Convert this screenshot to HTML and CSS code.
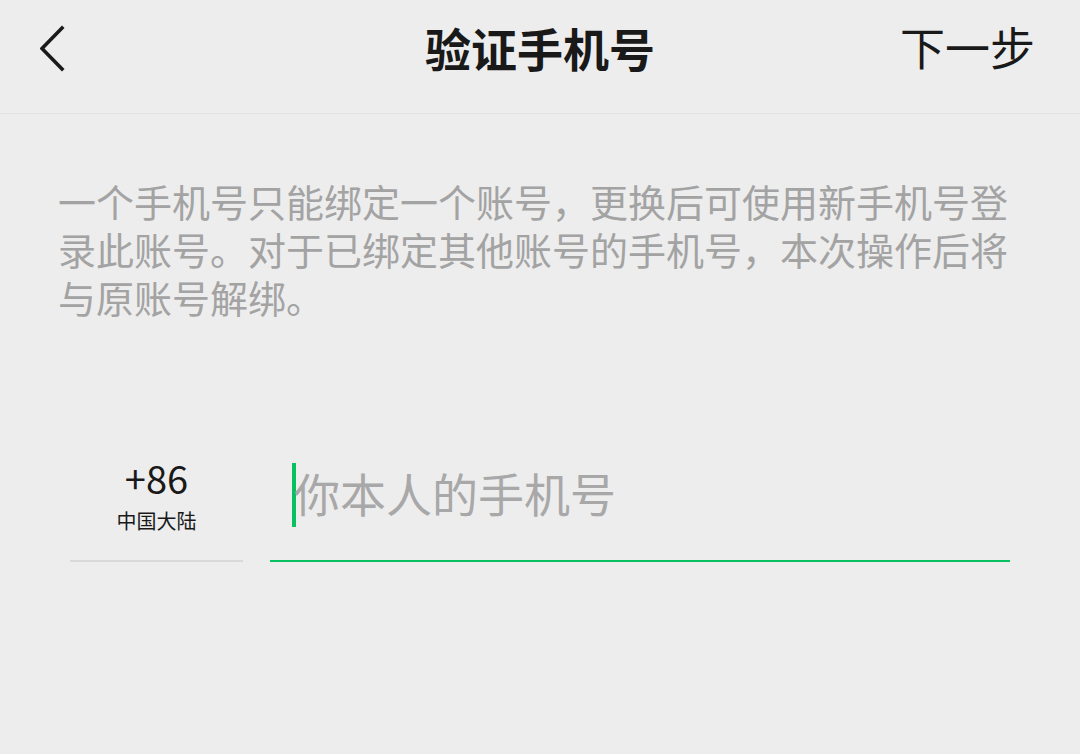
FILE: index.html
```
<!DOCTYPE html>
<html lang="zh-CN">
<head>
<meta charset="utf-8">
<title>验证手机号</title>
<link rel="stylesheet" href="styles.css">
</head>
<body>
<div class="page">
  <header class="topbar">
    <div class="left">
      <svg class="back" width="30" height="50" viewBox="0 0 30 50" aria-hidden="true">
        <path d="M22 4 L2 24.5 L22 45" fill="none" stroke="#1a1a1a" stroke-width="3.6" stroke-linecap="square" stroke-linejoin="miter"/>
      </svg>
    </div>
    <h1 class="title">验证手机号</h1>
    <div class="right"><span class="next">下一步</span></div>
  </header>

  <p class="desc">一个手机号只能绑定一个账号，更换后可使用新手机号登录此账号。对于已绑定其他账号的手机号，本次操作后将与原账号解绑。</p>

  <div class="phone-row">
    <div class="region">
      <div class="code">+86</div>
      <div class="region-name">中国大陆</div>
    </div>
    <div class="number">
      <span class="caret"></span>
      <span class="placeholder">你本人的手机号</span>
    </div>
  </div>
</div>
</body>
</html>
```

FILE: styles.css
```
html, body {
  margin: 0;
  padding: 0;
  background: #ededed;
}

body {
  font-family: "Noto Sans CJK SC", "Noto Sans", sans-serif;
  color: #1a1a1a;
}

.page {
  width: 1080px;
  height: 754px;
  overflow: hidden;
}

.topbar {
  display: grid;
  grid-template-columns: 1fr auto 1fr;
  align-items: center;
  box-sizing: border-box;
  height: 114px;
  padding: 20px 0 45px;
  border-bottom: 1px solid #e2e2e2;
}

.left {
  display: flex;
  align-items: center;
  padding-left: 40px;
}

.back {
  display: block;
  margin-top: 4px;
}

.title {
  margin: 0;
  font-size: 46px;
  font-weight: 700;
  line-height: 48px;
  color: #191919;
}

.right {
  display: flex;
  justify-content: flex-end;
  padding-right: 45px;
}

.next {
  font-size: 45px;
  line-height: 48px;
  color: #191919;
}

.desc {
  margin: 63px 0 0;
  padding: 0 58px;
  font-size: 38px;
  line-height: 48px;
  color: #a3a3a3;
}

.phone-row {
  display: flex;
  align-items: flex-end;
  gap: 27px;
  margin-top: 135px;
  padding: 0 70px;
}

.region {
  width: 173px;
  flex: none;
  text-align: center;
  padding-bottom: 18px;
  border-bottom: 2px solid #d9d9d9;
}

.code {
  font-size: 38px;
  line-height: 44px;
  color: #191919;
}

.region-name {
  font-size: 20px;
  line-height: 42px;
  color: #191919;
}

.number {
  flex: 1;
  display: flex;
  align-items: flex-start;
  padding-bottom: 33px;
  padding-left: 22px;
  border-bottom: 2px solid #07c160;
}

.caret {
  width: 4px;
  height: 64px;
  background: #07c160;
  flex: none;
}

.placeholder {
  font-size: 46px;
  line-height: 58px;
  color: #a8a8a8;
  margin-left: -2px;
}
```
